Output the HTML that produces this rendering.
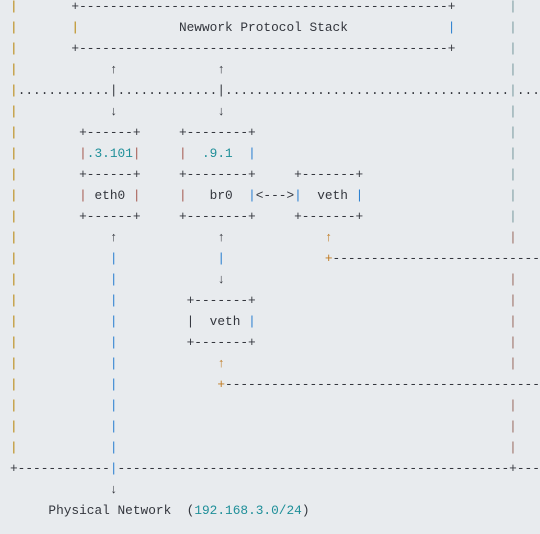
<!DOCTYPE html>
<html><head><meta charset="utf-8"><style>
html,body{margin:0;padding:0;background:#e8ebee;width:540px;height:534px;overflow:hidden}
#w{position:absolute;left:0;top:-4px;width:540px;height:538px;overflow:hidden;font-family:"Liberation Mono",monospace;font-size:12.8px;color:#33363d}
.r{position:relative;height:21px;line-height:21px;white-space:pre}
.r span{position:absolute;top:0}
.g{color:#b8860b}.b{color:#2a7fd0}.rd{color:#a65a50}.t{color:#1f8f99}.o{color:#c07a20}.c{color:#7a9a9e}.m{color:#9a6a60}
</style></head><body><div id="w">
<div class="r"><span class="g" style="left:calc(10px + 0ch)">|</span><span style="left:calc(10px + 8ch)">+------------------------------------------------+</span><span class="c" style="left:calc(10px + 65ch)">|</span></div>
<div class="r"><span class="g" style="left:calc(10px + 0ch)">|</span><span class="g" style="left:calc(10px + 8ch)">|</span><span style="left:calc(10px + 22ch)">Newwork Protocol Stack</span><span class="b" style="left:calc(10px + 57ch)">|</span><span class="c" style="left:calc(10px + 65ch)">|</span></div>
<div class="r"><span class="g" style="left:calc(10px + 0ch)">|</span><span style="left:calc(10px + 8ch)">+------------------------------------------------+</span><span class="c" style="left:calc(10px + 65ch)">|</span></div>
<div class="r"><span class="g" style="left:calc(10px + 0ch)">|</span><span style="left:calc(10px + 13ch)">↑</span><span style="left:calc(10px + 27ch)">↑</span><span class="c" style="left:calc(10px + 65ch)">|</span></div>
<div class="r"><span style="left:calc(10px + 0ch)"><span class="g" style="position:static">|</span>............|.............|.....................................<span class="c" style="position:static">|</span>.....</span></div>
<div class="r"><span class="g" style="left:calc(10px + 0ch)">|</span><span style="left:calc(10px + 13ch)">↓</span><span style="left:calc(10px + 27ch)">↓</span><span class="c" style="left:calc(10px + 65ch)">|</span></div>
<div class="r"><span class="g" style="left:calc(10px + 0ch)">|</span><span style="left:calc(10px + 9ch)">+------+</span><span style="left:calc(10px + 22ch)">+--------+</span><span class="c" style="left:calc(10px + 65ch)">|</span></div>
<div class="r"><span class="g" style="left:calc(10px + 0ch)">|</span><span style="left:calc(10px + 9ch)"><span class="rd" style="position:static">|</span><span class="t" style="position:static">.3.101</span><span class="rd" style="position:static">|</span></span><span style="left:calc(10px + 22ch)"><span class="rd" style="position:static">|</span>  <span class="t" style="position:static">.9.1</span>  <span class="b" style="position:static">|</span></span><span class="c" style="left:calc(10px + 65ch)">|</span></div>
<div class="r"><span class="g" style="left:calc(10px + 0ch)">|</span><span style="left:calc(10px + 9ch)">+------+</span><span style="left:calc(10px + 22ch)">+--------+</span><span style="left:calc(10px + 37ch)">+-------+</span><span class="c" style="left:calc(10px + 65ch)">|</span></div>
<div class="r"><span class="g" style="left:calc(10px + 0ch)">|</span><span style="left:calc(10px + 9ch)"><span class="rd" style="position:static">|</span> eth0 <span class="rd" style="position:static">|</span></span><span style="left:calc(10px + 22ch)"><span class="rd" style="position:static">|</span>   br0  <span class="b" style="position:static">|</span>&lt;---&gt;<span class="b" style="position:static">|</span>  veth <span class="b" style="position:static">|</span></span><span class="c" style="left:calc(10px + 65ch)">|</span></div>
<div class="r"><span class="g" style="left:calc(10px + 0ch)">|</span><span style="left:calc(10px + 9ch)">+------+</span><span style="left:calc(10px + 22ch)">+--------+</span><span style="left:calc(10px + 37ch)">+-------+</span><span class="c" style="left:calc(10px + 65ch)">|</span></div>
<div class="r"><span class="g" style="left:calc(10px + 0ch)">|</span><span style="left:calc(10px + 13ch)">↑</span><span style="left:calc(10px + 27ch)">↑</span><span class="o" style="left:calc(10px + 41ch)">↑</span><span class="m" style="left:calc(10px + 65ch)">|</span></div>
<div class="r"><span class="g" style="left:calc(10px + 0ch)">|</span><span class="b" style="left:calc(10px + 13ch)">|</span><span class="b" style="left:calc(10px + 27ch)">|</span><span style="left:calc(10px + 41ch)"><span class="o" style="position:static">+</span>---------------------------</span></div>
<div class="r"><span class="g" style="left:calc(10px + 0ch)">|</span><span class="b" style="left:calc(10px + 13ch)">|</span><span style="left:calc(10px + 27ch)">↓</span><span class="m" style="left:calc(10px + 65ch)">|</span></div>
<div class="r"><span class="g" style="left:calc(10px + 0ch)">|</span><span class="b" style="left:calc(10px + 13ch)">|</span><span style="left:calc(10px + 23ch)">+-------+</span><span class="m" style="left:calc(10px + 65ch)">|</span></div>
<div class="r"><span class="g" style="left:calc(10px + 0ch)">|</span><span class="b" style="left:calc(10px + 13ch)">|</span><span style="left:calc(10px + 23ch)">|  veth <span class="b" style="position:static">|</span></span><span class="m" style="left:calc(10px + 65ch)">|</span></div>
<div class="r"><span class="g" style="left:calc(10px + 0ch)">|</span><span class="b" style="left:calc(10px + 13ch)">|</span><span style="left:calc(10px + 23ch)">+-------+</span><span class="m" style="left:calc(10px + 65ch)">|</span></div>
<div class="r"><span class="g" style="left:calc(10px + 0ch)">|</span><span class="b" style="left:calc(10px + 13ch)">|</span><span class="o" style="left:calc(10px + 27ch)">↑</span><span class="m" style="left:calc(10px + 65ch)">|</span></div>
<div class="r"><span class="g" style="left:calc(10px + 0ch)">|</span><span class="b" style="left:calc(10px + 13ch)">|</span><span style="left:calc(10px + 27ch)"><span class="o" style="position:static">+</span>-----------------------------------------</span></div>
<div class="r"><span class="g" style="left:calc(10px + 0ch)">|</span><span class="b" style="left:calc(10px + 13ch)">|</span><span class="m" style="left:calc(10px + 65ch)">|</span></div>
<div class="r"><span class="g" style="left:calc(10px + 0ch)">|</span><span class="b" style="left:calc(10px + 13ch)">|</span><span class="m" style="left:calc(10px + 65ch)">|</span></div>
<div class="r"><span class="g" style="left:calc(10px + 0ch)">|</span><span class="b" style="left:calc(10px + 13ch)">|</span><span class="m" style="left:calc(10px + 65ch)">|</span></div>
<div class="r"><span style="left:calc(10px + 0ch)">+------------<span class="b" style="position:static">|</span>---------------------------------------------------+---</span></div>
<div class="r"><span style="left:calc(10px + 13ch)">↓</span></div>
<div class="r"><span style="left:calc(10px + 5ch)">Physical Network  (<span class="t" style="position:static">192.168.3.0/24</span>)</span></div>
</div></body></html>
